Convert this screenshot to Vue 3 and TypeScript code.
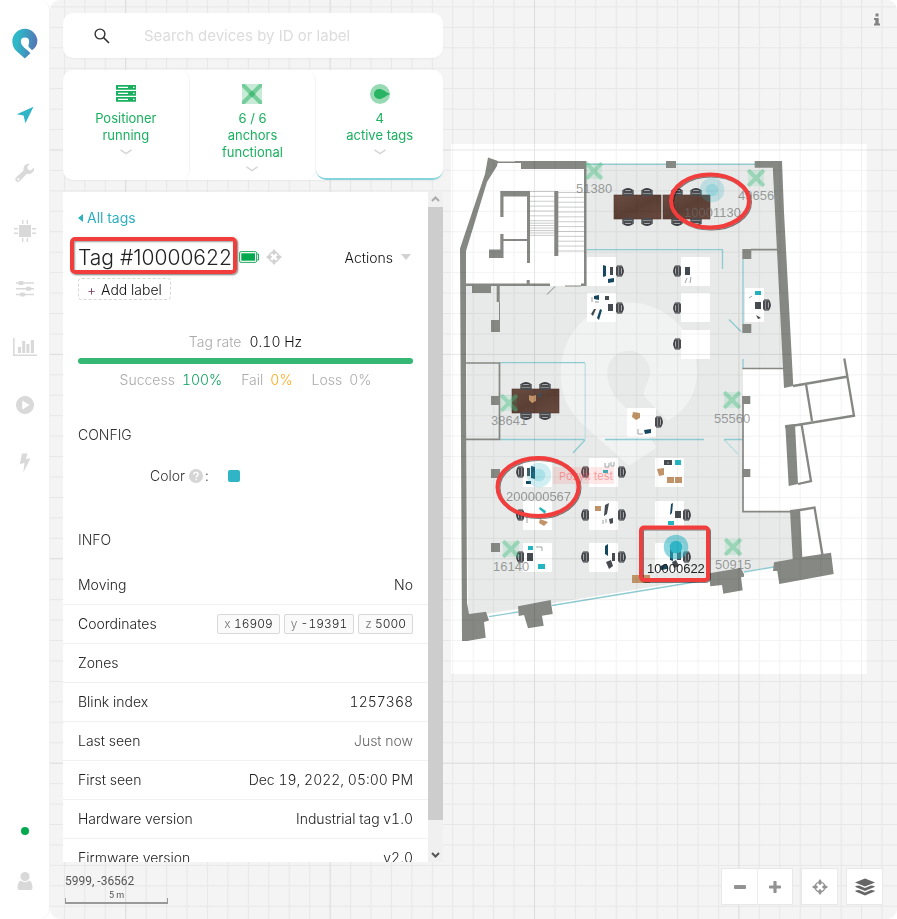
<script setup lang="ts">
import { ref } from 'vue'

interface Point { x: number; y: number }
interface Label extends Point { text: string; tx: number; ty: number }
interface Chair extends Point { rot: number }

const query = ref('')

const navItems = [
  { id: 'map', label: 'Map', active: true },
  { id: 'setup', label: 'Setup', active: false },
  { id: 'devices', label: 'Devices', active: false },
  { id: 'settings', label: 'Settings', active: false },
  { id: 'analytics', label: 'Analytics', active: false },
  { id: 'replay', label: 'Replay', active: false },
  { id: 'triggers', label: 'Triggers', active: false },
]

const anchors: Label[] = [
  { text: '51380', x: 594, y: 171, tx: 576, ty: 193 },
  { text: '49656', x: 756, y: 178, tx: 738, ty: 200 },
  { text: '55560', x: 732, y: 400, tx: 714, ty: 423 },
  { text: '38641', x: 509, y: 403, tx: 491, ty: 425 },
  { text: '16140', x: 511, y: 549, tx: 493, ty: 571 },
  { text: '50915', x: 733, y: 547, tx: 715, ty: 569 },
]

const desks: Point[] = [
  { x: 587, y: 257 }, { x: 587, y: 293 },
  { x: 681, y: 257 }, { x: 681, y: 293 }, { x: 681, y: 330 },
  { x: 627, y: 408 },
  { x: 523, y: 458 }, { x: 589, y: 458 }, { x: 655, y: 458 },
  { x: 523, y: 501 }, { x: 589, y: 501 }, { x: 655, y: 501 },
  { x: 523, y: 543 }, { x: 589, y: 543 }, { x: 655, y: 543 },
]

const tables: Point[] = [{ x: 614, y: 195 }, { x: 663, y: 195 }, { x: 512, y: 389 }]

// Chairs are drawn facing left; rot turns them to their table.
const chairs: Chair[] = [
  { x: 620, y: 271, rot: 0 }, { x: 620, y: 308, rot: 0 }, { x: 767, y: 305, rot: 0 },
  { x: 659, y: 422, rot: 0 }, { x: 687, y: 515, rot: 0 }, { x: 687, y: 557, rot: 0 },
  { x: 622, y: 472, rot: 0 }, { x: 622, y: 515, rot: 0 }, { x: 622, y: 557, rot: 0 },
  { x: 677, y: 271, rot: 180 }, { x: 677, y: 308, rot: 180 }, { x: 677, y: 344, rot: 180 },
  { x: 520, y: 472, rot: 180 }, { x: 520, y: 515, rot: 180 }, { x: 520, y: 557, rot: 180 },
  { x: 585, y: 472, rot: 180 }, { x: 585, y: 515, rot: 180 }, { x: 585, y: 557, rot: 180 },
  ...tables.flatMap((t) => [
    { x: t.x + 14, y: t.y - 3, rot: -90 }, { x: t.x + 33, y: t.y - 3, rot: -90 },
    { x: t.x + 14, y: t.y + 27, rot: 90 }, { x: t.x + 33, y: t.y + 27, rot: 90 },
  ]),
]

const stairs = Array.from({ length: 13 }, (_, i) => 192.5 + i * 4.87)

const info = [
  { label: 'Moving', value: 'No' },
  { label: 'Coordinates', coords: [['x', '16909'], ['y', '-19391'], ['z', '5000']] },
  { label: 'Zones', value: '' },
  { label: 'Blink index', value: '1257368' },
  { label: 'Last seen', value: 'Just now', muted: true },
  { label: 'First seen', value: 'Dec 19, 2022, 05:00 PM' },
  { label: 'Hardware version', value: 'Industrial tag v1.0' },
  { label: 'Firmware version', value: 'v2.0' },
]
</script>

<template>
  <div class="app">
    <nav class="nav">
      <a href="#" class="logo" aria-label="Home">
        <svg viewBox="35 85 79 93" width="26" height="31">
          <defs>
            <linearGradient id="brand" x1="0" y1="0.3" x2="1" y2="0.5">
              <stop offset="0.2" stop-color="#2eb8c8" />
              <stop offset="1" stop-color="#5474b4" />
            </linearGradient>
          </defs>
          <path fill="url(#brand)" d="M91 161 L74 177 L50 156 C41 148 36 138 36 124 A38 37 0 0 1 112 124 C112 137 105 146 96 152 L86 142 C83 138 87 134 87 126 A12 12 0 0 0 62 126 C62 140 78 146 91 161Z" />
        </svg>
      </a>
      <a v-for="item in navItems" :key="item.id" href="#" class="nav-item" :class="{ active: item.active }" :aria-label="item.label">
        <svg v-if="item.id === 'map'" viewBox="0 0 18 18" width="18" height="18"><path d="M17.5 0.8 L0.8 8.3 L7.6 9.4 L9.4 17.2Z" /></svg>
        <svg v-else-if="item.id === 'setup'" viewBox="0 0 20 20" width="20" height="20">
          <path fill-rule="evenodd" d="M19 4.6 A5.4 5.4 0 0 1 11.9 10.7 L4.9 18 A2.6 2.6 0 0 1 1.2 14.3 L8.6 7.4 A5.4 5.4 0 0 1 15 0.8 L12.3 3.8 L13 6.6 L15.8 7.4Z M3.3 15.2 a1 1 0 1 0 0.1 0Z" />
        </svg>
        <svg v-else-if="item.id === 'devices'" viewBox="0 0 22 22" width="22" height="22">
          <path d="M5 5h12v12H5z M8 0h1.4v4H8z M12.6 0H14v4h-1.4z M8 18h1.4v4H8z M12.6 18H14v4h-1.4z M0 8h4v1.4H0z M0 12.6h4V14H0z M18 8h4v1.4h-4z M18 12.6h4V14h-4z" />
        </svg>
        <svg v-else-if="item.id === 'settings'" viewBox="0 0 18 16" width="18" height="16">
          <path d="M0 1.3h18v1.4H0z M0 7.1h18v1.4H0z M0 12.8h18v1.4H0z" /><rect x="2.5" y="0" width="5" height="4" rx="1" /><rect x="10" y="5.8" width="5" height="4" rx="1" /><rect x="4" y="11.5" width="5" height="4" rx="1" />
        </svg>
        <svg v-else-if="item.id === 'analytics'" viewBox="0 0 24 18" width="24" height="18">
          <path d="M0 0h1.6v16.4H24V18H0z M5 9h3v6H5z M9.2 3h3v12h-3z M13.4 6h3v9h-3z M17.8 2h3.2v13h-3.2z" />
        </svg>
        <svg v-else-if="item.id === 'replay'" viewBox="0 0 18 18" width="18" height="18"><path fill-rule="evenodd" d="M9 0a9 9 0 1 0 0.01 0Z M6.3 4.5 L13.6 9 L6.3 13.5Z" /></svg>
        <svg v-else viewBox="0 0 12 20" width="12" height="20"><path d="M3 0.5H8.6L6.8 6L11.5 5.2L4.3 19.5L5.5 10L0.8 11Z" /></svg>
      </a>
      <div class="nav-foot">
        <span class="online"></span>
        <a href="#" class="nav-user" aria-label="Account">
          <svg viewBox="0 0 16 18" width="16" height="18"><circle cx="8" cy="4.6" r="4.6" /><path d="M4 8.5 C6 10.8 10 10.8 12 8.5 C14.5 9.2 15.5 12 15.5 16 Q15.5 18 13.5 18 H2.5 Q0.5 18 0.5 16 C0.5 12 1.5 9.2 4 8.5Z" /></svg>
        </a>
      </div>
    </nav>

    <main class="main">
      <svg class="map" role="img" aria-label="Floor plan">
        <defs>
          <pattern id="minor" x="75.2" y="149.5" width="20.44" height="20.44" patternUnits="userSpaceOnUse" patternTransform="translate(50 0)">
            <path d="M0.5 0V20.44M0 0.5H20.44" stroke="#000" stroke-opacity="0.05" fill="none" />
          </pattern>
          <pattern id="major" x="75.2" y="149.5" width="204.4" height="204.4" patternUnits="userSpaceOnUse" patternTransform="translate(50 0)">
            <path d="M0.5 0V204.4M0 0.5H204.4" stroke="#000" stroke-opacity="0.05" fill="none" />
          </pattern>
          <linearGradient id="wood" x1="0" y1="0" x2="1" y2="1">
            <stop offset="0" stop-color="#6b4d41" /><stop offset="0.5" stop-color="#5b3f35" /><stop offset="1" stop-color="#694a3f" />
          </linearGradient>
          <g id="chair">
            <path d="M-4 -4.5H1V4.5H-4Z" fill="#4a4c50" />
            <path d="M-3 -5H2M-3 5H2" stroke="#333539" stroke-width="1.2" />
            <path d="M1.5 -4.5Q4.5 0 1.5 4.5" fill="none" stroke="#3b3d42" stroke-width="1.8" />
            <path d="M-1.5 -4V4M1.5 -3V3" stroke="#9a9c9f" stroke-width="0.8" />
          </g>
          <g id="anchor">
            <rect x="-8" y="-8" width="16" height="16" fill="#3fbf7c" fill-opacity="0.14" />
            <path d="M-6.5 -6.5L6.5 6.5M6.5 -6.5L-6.5 6.5" stroke="#4cbf85" stroke-opacity="0.4" stroke-width="4" stroke-linecap="square" />
          </g>
          <g id="tag"><circle r="12.3" fill="#2fb5c5" fill-opacity="0.55" /><circle r="6.3" fill="#2fb5c5" /></g>
          <filter id="lift" x="-20%" y="-20%" width="140%" height="140%"><feDropShadow dx="1" dy="1" stdDeviation="0.7" flood-opacity="0.5" /></filter>
        </defs>
        <g transform="translate(-50 0)">
          <rect x="451" y="144" width="415.7" height="530" fill="#fff" />
          <path fill="#e7eae9" d="M586 163H772L784 368H743V512H791L793 560L773 567L468 617L466 286H586Z" />
          <path transform="translate(545 170) scale(0.3333)" fill="#fff" fill-opacity="0.42" d="M335 832 L252 888 L130 778 C75 728 47 690 47 606 A204 208 0 0 1 456 606 C456 670 425 720 368 752 L303 685 C285 662 315 640 315 606 A64 64 0 0 0 187 606 C187 665 220 692 262 732Z" />

          <g stroke="#c4c7c5" stroke-width="0.9">
            <template v-for="(y, i) in stairs" :key="i">
              <path v-if="i < 10" :d="`M530 ${y - 1}H554`" /><path :d="`M558 ${y}H584`" /><path v-if="i > 9" :d="`M530 ${y - 18}H554`" />
            </template>
          </g>

          <g fill="none" stroke="#8fcbd2" stroke-width="1.3">
            <path d="M587 164.3H666M676 164.3H755M489 616.7L518 612M552 605.5L710 579.5M744 572L774 567" />
            <path d="M587 249.7H722.5V269M743 259V324M743 359V368M729 319.5L741 331.5" />
            <path d="M500 362.7H585M500 439.5H585M605 439.5H704M724 439.5H743M585 440L573 453" />
            <path d="M585.2 363V440" stroke="#bfe0e4" /><path d="M724.5 440L738 454" stroke-dasharray="1 1" />
          </g>

          <g fill="#868883">
            <path d="M488 157.5L498 161L497 166L487 182L466 251V370L467 603L469 614L486 611.7L489 620.5L484 622L485.7 637.7L467 641H462L460 248.5L485 174Z" />
            <path d="M497 161.5H515V161H586.5V286H581V283.5H584V169H521V163H497Z" />
            <path d="M500.3 191H530V263H527V241H503.5V258H489V249.5H500.3V234H503.5V239H527V196.5H503.5V217H500.3Z" />
            <rect x="554.3" y="191" width="4" height="65" /><rect x="526.7" y="280" width="3" height="4" />
            <rect x="465" y="283.5" width="85" height="2.5" /><rect x="472" y="284" width="19" height="9" /><rect x="496.7" y="286" width="3" height="16" />
            <rect x="491" y="320" width="9" height="12" /><rect x="491" y="396" width="9" height="9" /><rect x="491" y="469" width="9" height="9" /><rect x="491" y="543" width="9" height="9" />
            <rect x="666" y="161" width="10" height="7" /><path d="M754.7 161H782L784 212L793.3 386L784 388L772.7 167.7H754.7Z" />
            <rect x="742.3" y="249" width="9" height="10" /><rect x="742.3" y="324" width="9" height="9" /><rect x="742.3" y="396" width="8" height="8" /><rect x="742.3" y="469" width="8" height="8" />
            <path d="M785.3 425L795 424L798 484L788.7 486ZM790 510L800 508.7L802.3 557L831 552.7L833.7 574L779.3 584L777.3 571H773L774 562.3L792.7 559Z" />
            <path d="M709 573.3L740.7 568L744 574V576.7L741 577.3L742.7 590.3L723.3 593.7L722 585L710.3 586.3ZM518 606.3L550.7 600L552.7 614L542 615.7L543.7 625.7L528 628.3L524 615L518.7 616Z" />
          </g>
          <g fill="none" stroke="#868883">
            <path d="M565 286H581M555 286.5L547 294.5M499.5 302V320" stroke-width="1" />
            <path d="M466 363H499.5V439.3H466M751 249.7H777M742.3 368.5H784M743 396V511.7H791" stroke-width="1.7" />
            <path d="M793 386L848 376.5M806 384L812 421M844.3 358.5L854 415.7L785 427M801.5 424L811 481L798 484M800 510L814.5 507.5L822.5 555" stroke-width="2.3" />
          </g>

          <g fill="#fff">
            <rect v-for="(d, i) in desks" :key="i" :x="d.x" :y="d.y" width="29" height="29" rx="1" /><rect x="745" y="288" width="19" height="34" />
          </g>
          <rect v-for="(t, i) in tables" :key="i" :x="t.x" :y="t.y" width="47" height="24" fill="url(#wood)" stroke="#513329" stroke-width="0.6" />
          <use v-for="(c, i) in chairs" :key="i" href="#chair" :transform="`translate(${c.x} ${c.y}) rotate(${c.rot})`" />

          <g fill="#164761">
            <path d="M603 265L606 266V276L603 277ZM608 279L614 278V282L608 283ZM594 296L599 295V300L594 299ZM600 309L597 318L599 320L602 310ZM531 466L535 467V479L531 478ZM526 481H531V484H526ZM644 430L651 429V433L645 434ZM671 504L673 503L672 513L670 515ZM605 546L608 544V556L605 554ZM670 549L673 550V561L670 560ZM660 566L667 564V569L661 570Z" />
          </g>
          <g fill="#454b50">
            <path d="M610 267H613V275H610ZM685 267H690V275H685ZM608 304H613V311H608ZM755 302H761V309H755ZM605 296H609V300H605ZM591 314L594 309H596L593 316ZM527 468H530V476H527ZM664 460H672V465H664ZM675 511H681V518H675ZM527 553H533V561H527ZM606 562L611 560L613 566L609 569ZM612 553H615V561H612ZM538 393H542V397H538ZM677 551H681V560H677ZM605 505L609 503L607 514L604 516ZM609 519L613 518V523L610 524ZM756 315L761 318L758 319ZM672 562L676 560L679 566L674 568Z" />
          </g>
          <g fill="#23b5c0">
            <path d="M755 291H761V295H755ZM603 470H608V473H603ZM675 460H681V465H675ZM540 507L546 511L545 514L539 509ZM668 521H674V525H668ZM528 546H533V550H528ZM538 564H545V569H538Z" />
          </g>
          <g fill="#c09468">
            <path d="M529 395L532 396L536 395V401L532 403L529 400ZM633 412L640 413V418L636 420L632 417ZM657 469L664 468V475L659 476ZM667 477H674V483H667ZM675 477H682V483H675ZM540 519L548 522L544 526L539 523ZM595 506H601V511H595ZM632 575H650V583H632Z" />
          </g>
          <g fill="none" stroke="#9ba3a3">
            <path d="M592 297V302M595 302H599M687 278L685 283M691 277L690 283M605 463V467H609V463M611 462V466H614V462M638 429V434H643M603 520V524M606 519V523M527 517V523M536 547H542V551M668 462V464M752 296L749 298" />
          </g>

          <rect x="553" y="467" width="61" height="17" fill="#ff5a5f" fill-opacity="0.14" />
          <text x="559" y="480" class="zone-label">Pozyx test</text>

          <g v-for="a in anchors" :key="a.text">
            <use href="#anchor" :transform="`translate(${a.x} ${a.y})`" /><text :x="a.tx" :y="a.ty" class="device-label">{{ a.text }}</text>
          </g>
          <g opacity="0.4"><use href="#tag" transform="translate(712 190)" /><use href="#tag" transform="translate(539 475)" /></g>
          <use href="#tag" transform="translate(676 547)" />
          <text x="684" y="217" class="device-label">10001130</text>
          <text x="506" y="501" class="device-label">200000567</text>
          <text x="647" y="573" class="device-label selected">10000622</text>

          <rect x="50" width="100%" height="100%" fill="url(#minor)" />
          <rect x="50" width="100%" height="100%" fill="url(#major)" />

          <g fill="none" stroke="#f23d3d" stroke-width="4" filter="url(#lift)">
            <ellipse cx="710" cy="201" rx="39" ry="26.5" /><ellipse cx="538" cy="487" rx="40.5" ry="29" /><rect x="641" y="527.5" width="67" height="52.5" rx="3" />
          </g>
        </g>
      </svg>

      <a href="#" class="map-info" aria-label="Map information">
        <svg viewBox="0 0 8 13" width="8" height="13"><path d="M2.5 0.5H5.5V3.5H2.5ZM1 5H5.7V10.5H7V12.5H1V10.5H2.3V7H1Z" fill="#838383" /></svg>
      </a>

      <div class="side">
        <label class="search">
          <svg viewBox="0 0 16 16" width="16" height="16"><circle cx="6" cy="6" r="4.9" fill="none" stroke="#333" stroke-width="1.4" /><path d="M9.6 9.6L15 15" stroke="#333" stroke-width="1.6" /></svg>
          <input v-model="query" type="text" aria-label="Search devices" placeholder="Search devices by ID or label" />
        </label>

        <div class="cards">
          <button type="button" class="card">
            <svg viewBox="0 0 20 20" width="20" height="20">
              <path fill="#1ab05f" d="M0 1H20V5.8H0ZM0 7H20V11.8H0ZM0 13H20V17.8H0Z" />
              <path stroke="#fff" stroke-width="1.4" d="M2 3.4H12M2 9.4H12M2 15.4H12M17 3.4H18.5M17 9.4H18.5M17 15.4H18.5" />
            </svg>
            <span>Positioner<br />running</span>
            <svg class="chevron" viewBox="0 0 12 6" width="12" height="6"><path d="M0.5 0.8L6 4.5L11.5 0.8" /></svg>
          </button>
          <button type="button" class="card">
            <svg viewBox="0 0 20 20" width="20" height="20">
              <rect width="20" height="20" fill="#c8ebd7" /><path d="M1.5 0L20 18.5L18.5 20L0 1.5ZM0 18.5L18.5 0L20 1.5L1.5 20Z" stroke="#75cd9b" stroke-width="2" fill="#75cd9b" /><path d="M10 6.5L13.5 10L10 13.5L6.5 10Z" fill="#45bb76" />
            </svg>
            <span>6 / 6<br />anchors<br />functional</span>
            <svg class="chevron" viewBox="0 0 12 6" width="12" height="6"><path d="M0.5 0.8L6 4.5L11.5 0.8" /></svg>
          </button>
          <button type="button" class="card current">
            <svg viewBox="0 0 20 20" width="20" height="20"><circle cx="10" cy="10" r="10" fill="#98dab4" /><path d="M9 5C13 5 14.5 7.5 20 10C14.5 12.5 13 15 9 15A5 5 0 0 1 9 5Z" fill="#28b463" /></svg>
            <span>4<br />active tags</span>
            <svg class="chevron" viewBox="0 0 12 6" width="12" height="6"><path d="M0.5 0.8L6 4.5L11.5 0.8" /></svg>
          </button>
        </div>

        <section class="panel">
          <div class="content">
            <a href="#" class="back"><svg viewBox="0 0 5 8" width="5" height="8"><path d="M5 0V8L0 4Z" /></svg>All tags</a>
            <div class="title-row">
              <h1>Tag #10000622<span class="marker"></span></h1>
              <svg viewBox="0 0 20 12" width="20" height="12"><rect x="0.6" y="0.6" width="17" height="10.8" rx="1.5" fill="#fff" stroke="#20ac5e" /><path d="M18 3H19.5V9H18" fill="none" stroke="#20ac5e" /><rect x="2.3" y="2.3" width="13.7" height="7.4" fill="#02a94f" /></svg>
              <svg viewBox="0 0 16 16" width="16" height="16"><circle cx="8" cy="8" r="5" fill="none" stroke="#d0d0d0" stroke-width="1.5" /><path d="M8 0L9.5 2V5L8 6L6.5 5V2ZM8 16L9.5 14V11L8 10L6.5 11V14ZM0 8L2 6.5H5L6 8L5 9.5H2ZM16 8L14 6.5H11L10 8L11 9.5H14Z" fill="#d0d0d0" /></svg>
              <button type="button" class="actions">Actions<svg viewBox="0 0 10 6" width="10" height="6"><path d="M0 0H10L5 6Z" fill="#d2d2d2" /></svg></button>
            </div>
            <button type="button" class="add"><span>+</span>Add label</button>

            <div class="rate"><span>Tag rate</span><b>0.10 Hz</b></div>
            <div class="bar"></div>
            <div class="stats">
              <div>Success<b class="good">100%</b></div>
              <div>Fail<b class="warn">0%</b></div>
              <div>Loss<b class="none">0%</b></div>
            </div>

            <h2>CONFIG</h2>
            <div class="color-row">
              <span>Color</span>
              <svg viewBox="0 0 14 14" width="14" height="14"><circle cx="7" cy="7" r="7" fill="#d5d5d5" /><path d="M4.8 5.5C4.8 2.7 9.3 2.7 9.2 5.3C9.2 6.8 7.2 6.8 7.2 8.5M7.2 9.7V11.2" fill="none" stroke="#fff" stroke-width="1.5" /></svg>
              <span>:</span>
              <button type="button" class="swatch" aria-label="Tag color"></button>
            </div>

            <h2 class="second">INFO</h2>
            <table>
              <tbody>
                <tr v-for="row in info" :key="row.label">
                  <th scope="row">{{ row.label }}</th>
                  <td :class="{ muted: row.muted }">
                    <div v-if="row.coords" class="coords">
                      <span v-for="c in row.coords" :key="c[0]"><i>{{ c[0] }}</i> {{ c[1] }}</span>
                    </div>
                    <template v-else>{{ row.value }}</template>
                  </td>
                </tr>
              </tbody>
            </table>
          </div>
          <div class="scroll">
            <svg viewBox="0 0 15 15" width="15" height="15"><path d="M4 9L7.5 5.5L11 9" fill="none" stroke="#aaa" stroke-width="2" /></svg>
            <div class="thumb"></div>
            <svg viewBox="0 0 15 15" width="15" height="15"><path d="M4 6L7.5 9.5L11 6" fill="none" stroke="#555" stroke-width="2" /></svg>
          </div>
        </section>

        <div class="scale">
          <span>5999, -36562</span>
          <span class="ruler">5 m</span>
        </div>
      </div>

      <div class="controls">
        <div class="group">
          <button type="button" aria-label="Zoom out"><svg viewBox="0 0 12 12" width="12" height="12"><rect y="4" width="12" height="4" rx="1" /></svg></button>
          <button type="button" aria-label="Zoom in"><svg viewBox="0 0 12 12" width="12" height="12"><rect y="4.4" width="12" height="3.2" rx="0.8" /><rect x="4.4" width="3.2" height="12" rx="0.8" /></svg></button>
        </div>
        <div class="group"><button type="button" aria-label="Center map">
          <svg viewBox="0 0 16 16" width="16" height="16"><circle cx="8" cy="8" r="5" fill="none" stroke="#929292" stroke-width="1.2" /><path d="M8 0L9.5 2V5L8 6L6.5 5V2ZM8 16L9.5 14V11L8 10L6.5 11V14ZM0 8L2 6.5H5L6 8L5 9.5H2ZM16 8L14 6.5H11L10 8L11 9.5H14Z" /></svg>
        </button></div>
        <div class="group"><button type="button" aria-label="Layers">
          <svg viewBox="0 0 20 18" width="20" height="18" class="dark"><path d="M10 0.5L20 4.5L10 8.5L0 4.5ZM0.5 8L4 7.5L10 10L16 7.5L19.5 8V9L10 13L0.5 9ZM0.5 12.5L4 12L10 14.5L16 12L19.5 12.5V13.5L10 17.5L0.5 13.5Z" /></svg>
        </button></div>
      </div>
    </main>
  </div>
</template>

<style>
body { background: #fff; }
</style>

<style scoped>
* { box-sizing: border-box; }
.app { display: flex; height: 100vh; font: 400 14px/17px Inter, "Open Sans", sans-serif; color: #333; }
button { font: inherit; color: inherit; padding: 0; border: 0; background: none; }
a { text-decoration: none; }
svg { flex: none; display: block; }

.nav { width: 50px; flex: none; display: flex; flex-direction: column; align-items: center; border-right: 1px solid #f1f1f1; border-radius: 0 10px 10px 0; padding-bottom: 23px; }
.logo { margin-top: 28px; height: 58px; }
.nav-item { display: flex; align-items: center; justify-content: center; width: 100%; height: 58px; fill: #d9d9d9; }
.active { fill: #2fb5c5; }
.nav-foot { margin-top: auto; display: flex; flex-direction: column; align-items: center; gap: 37px; height: 69px; }
.online { width: 8px; height: 8px; border-radius: 50%; background: #02a94f; }
.nav-user { fill: #d9d9d9; }

.main { position: relative; flex: 1; min-width: 0; display: flex; justify-content: space-between; background: #f4f4f4; border-radius: 10px; overflow: hidden; }
.map { position: absolute; inset: 0; width: 100%; height: 100%; }
.device-label { font: 13px "Liberation Sans", Arial, sans-serif; fill: #6a6a6a; fill-opacity: 0.65; }
.selected { fill: #222; fill-opacity: 1; }
.zone-label { font: 11px Inter, sans-serif; fill: #ff5a5f; fill-opacity: 0.55; }
.map-info { position: absolute; top: 13px; right: 16px; }

.side { position: relative; width: 393px; padding: 13px 0 14px 13px; display: flex; flex-direction: column; gap: 12px; min-height: 0; }
.search { flex: none; display: flex; align-items: center; gap: 34px; height: 45px; padding: 0 31px; border-radius: 10px; background: #fff; box-shadow: 0 1px 2px #0000000d; }
.search input { flex: 1; min-width: 0; border: 0; outline: 0; padding: 0; background: none; font: 400 15px Inter, sans-serif; color: #333; }
.search input::placeholder { color: #dcdcdc; opacity: 1; }

.cards { flex: none; display: grid; grid-template-columns: repeat(3, 1fr); height: 110px; border-radius: 10px; background: #fff; box-shadow: 0 1px 2px #0000000d; }
.card { display: flex; flex-direction: column; align-items: center; justify-content: flex-start; gap: 6px; padding-top: 14px; border-right: 1px solid #f3f3f3; border-radius: 10px; font-size: 13px; line-height: 17px; color: #1ab05f; text-align: center; }
.current { border-right: 0; border-bottom: 2px solid #86d3db; }
.chevron { fill: none; stroke: #d5d5d5; stroke-width: 1.5px; margin-top: -1px; }

.panel { flex: 1; min-height: 0; display: flex; background: #fff; overflow: hidden; }
.content { flex: 1; min-width: 0; padding: 17px 15px 0; overflow: hidden; font-weight: 300; font-variant-numeric: tabular-nums; }
.scroll { width: 15px; display: flex; flex-direction: column; background: #f0f0f0; }
.thumb { flex: 1; margin-bottom: 27px; background: #cdcdcd; }
.back { display: flex; align-items: center; gap: 4px; font-weight: 400; color: #2fb0c2; fill: #2fb0c2; }
.title-row { display: flex; align-items: center; height: 40px; margin-top: 11px; gap: 7px; }
h1 { position: relative; margin: 0; padding-top: 2px; font-size: 21px; font-weight: 300; font-variant-numeric: normal; line-height: 26px; white-space: nowrap; color: #222; }
.marker { position: absolute; inset: -6px -5px -3px -8px; border: 4px solid #f23d3d; border-radius: 5px; box-shadow: 1px 1px 2px #0008, inset 1px 1px 2px #0006; }
.actions { display: flex; align-items: center; gap: 8px; margin-left: auto; padding-right: 2px; color: #111; }
.add { display: flex; align-items: center; gap: 5px; height: 22px; margin-top: 1px; padding: 0 8px; border: 1px dashed #d6d6d6; border-radius: 4px; color: #111; }
.add span { color: #70355f; }
.rate { display: flex; justify-content: center; gap: 8px; margin-top: 33px; color: #aaa; }
b { font-weight: 300; color: #111; }
.bar { height: 6px; margin-top: 8px; border-radius: 3px; background: #35b873; }
.stats { display: flex; justify-content: center; gap: 19px; margin-top: 7px; color: #aaa; }
.stats div { display: flex; gap: 7px; }
.stats .good { color: #0aa15c; }
.stats .warn { color: #ffa91c; }
.stats .none { color: #aaa; }
h2 { margin: 38px 0 0; font-size: 14px; line-height: 17px; font-weight: 300; }
.color-row { display: flex; align-items: center; gap: 4px; margin-top: 24px; padding-left: 72px; }
.color-row span:nth-of-type(2) { margin-left: -2px; }
.swatch { width: 12px; height: 12px; margin-left: 15px; border-radius: 2px; background: #2fb5c5; }
.second { margin-top: 47px; }
table { width: calc(100% + 30px); margin: 18px -15px 0; border-collapse: separate; border-spacing: 0; }
th, td { height: 39px; padding: 0 15px 2px; border-bottom: 1px solid #f1f1f1; font-weight: 300; color: #222; text-align: left; white-space: nowrap; }
th { padding-right: 0; }
td { text-align: right; padding-left: 0; }
td.muted { color: #666; }
.coords { display: flex; justify-content: flex-end; gap: 4px; margin-top: 2px; font-size: 12px; }
.coords span { height: 20px; padding: 0 6px; line-height: 18px; border: 1px solid #d9d9d9; border-radius: 2px; background: #fafafa; }
.coords i { font-style: normal; color: #777; }

.scale { flex: none; display: flex; flex-direction: column; width: 103px; height: 31px; margin-left: 2px; font-family: Roboto, sans-serif; font-size: 12px; line-height: 14px; color: #555; }
.ruler { height: 16px; border: 2px solid #999; border-width: 0 1px 2px; border-image: linear-gradient(transparent 11px, #999 11px) 1; font-size: 9px; line-height: 15px; text-align: center; }

.controls { position: relative; display: flex; align-self: flex-end; gap: 8px; padding: 0 14px 14px 0; }
.group { display: flex; background: #fff; border: 1px solid #e8e8e8; }
.group button { display: flex; align-items: center; justify-content: center; width: 35px; height: 35px; fill: #929292; }
.group button + button { border-left: 1px solid #ececec; }
.dark { fill: #666; }
</style>
